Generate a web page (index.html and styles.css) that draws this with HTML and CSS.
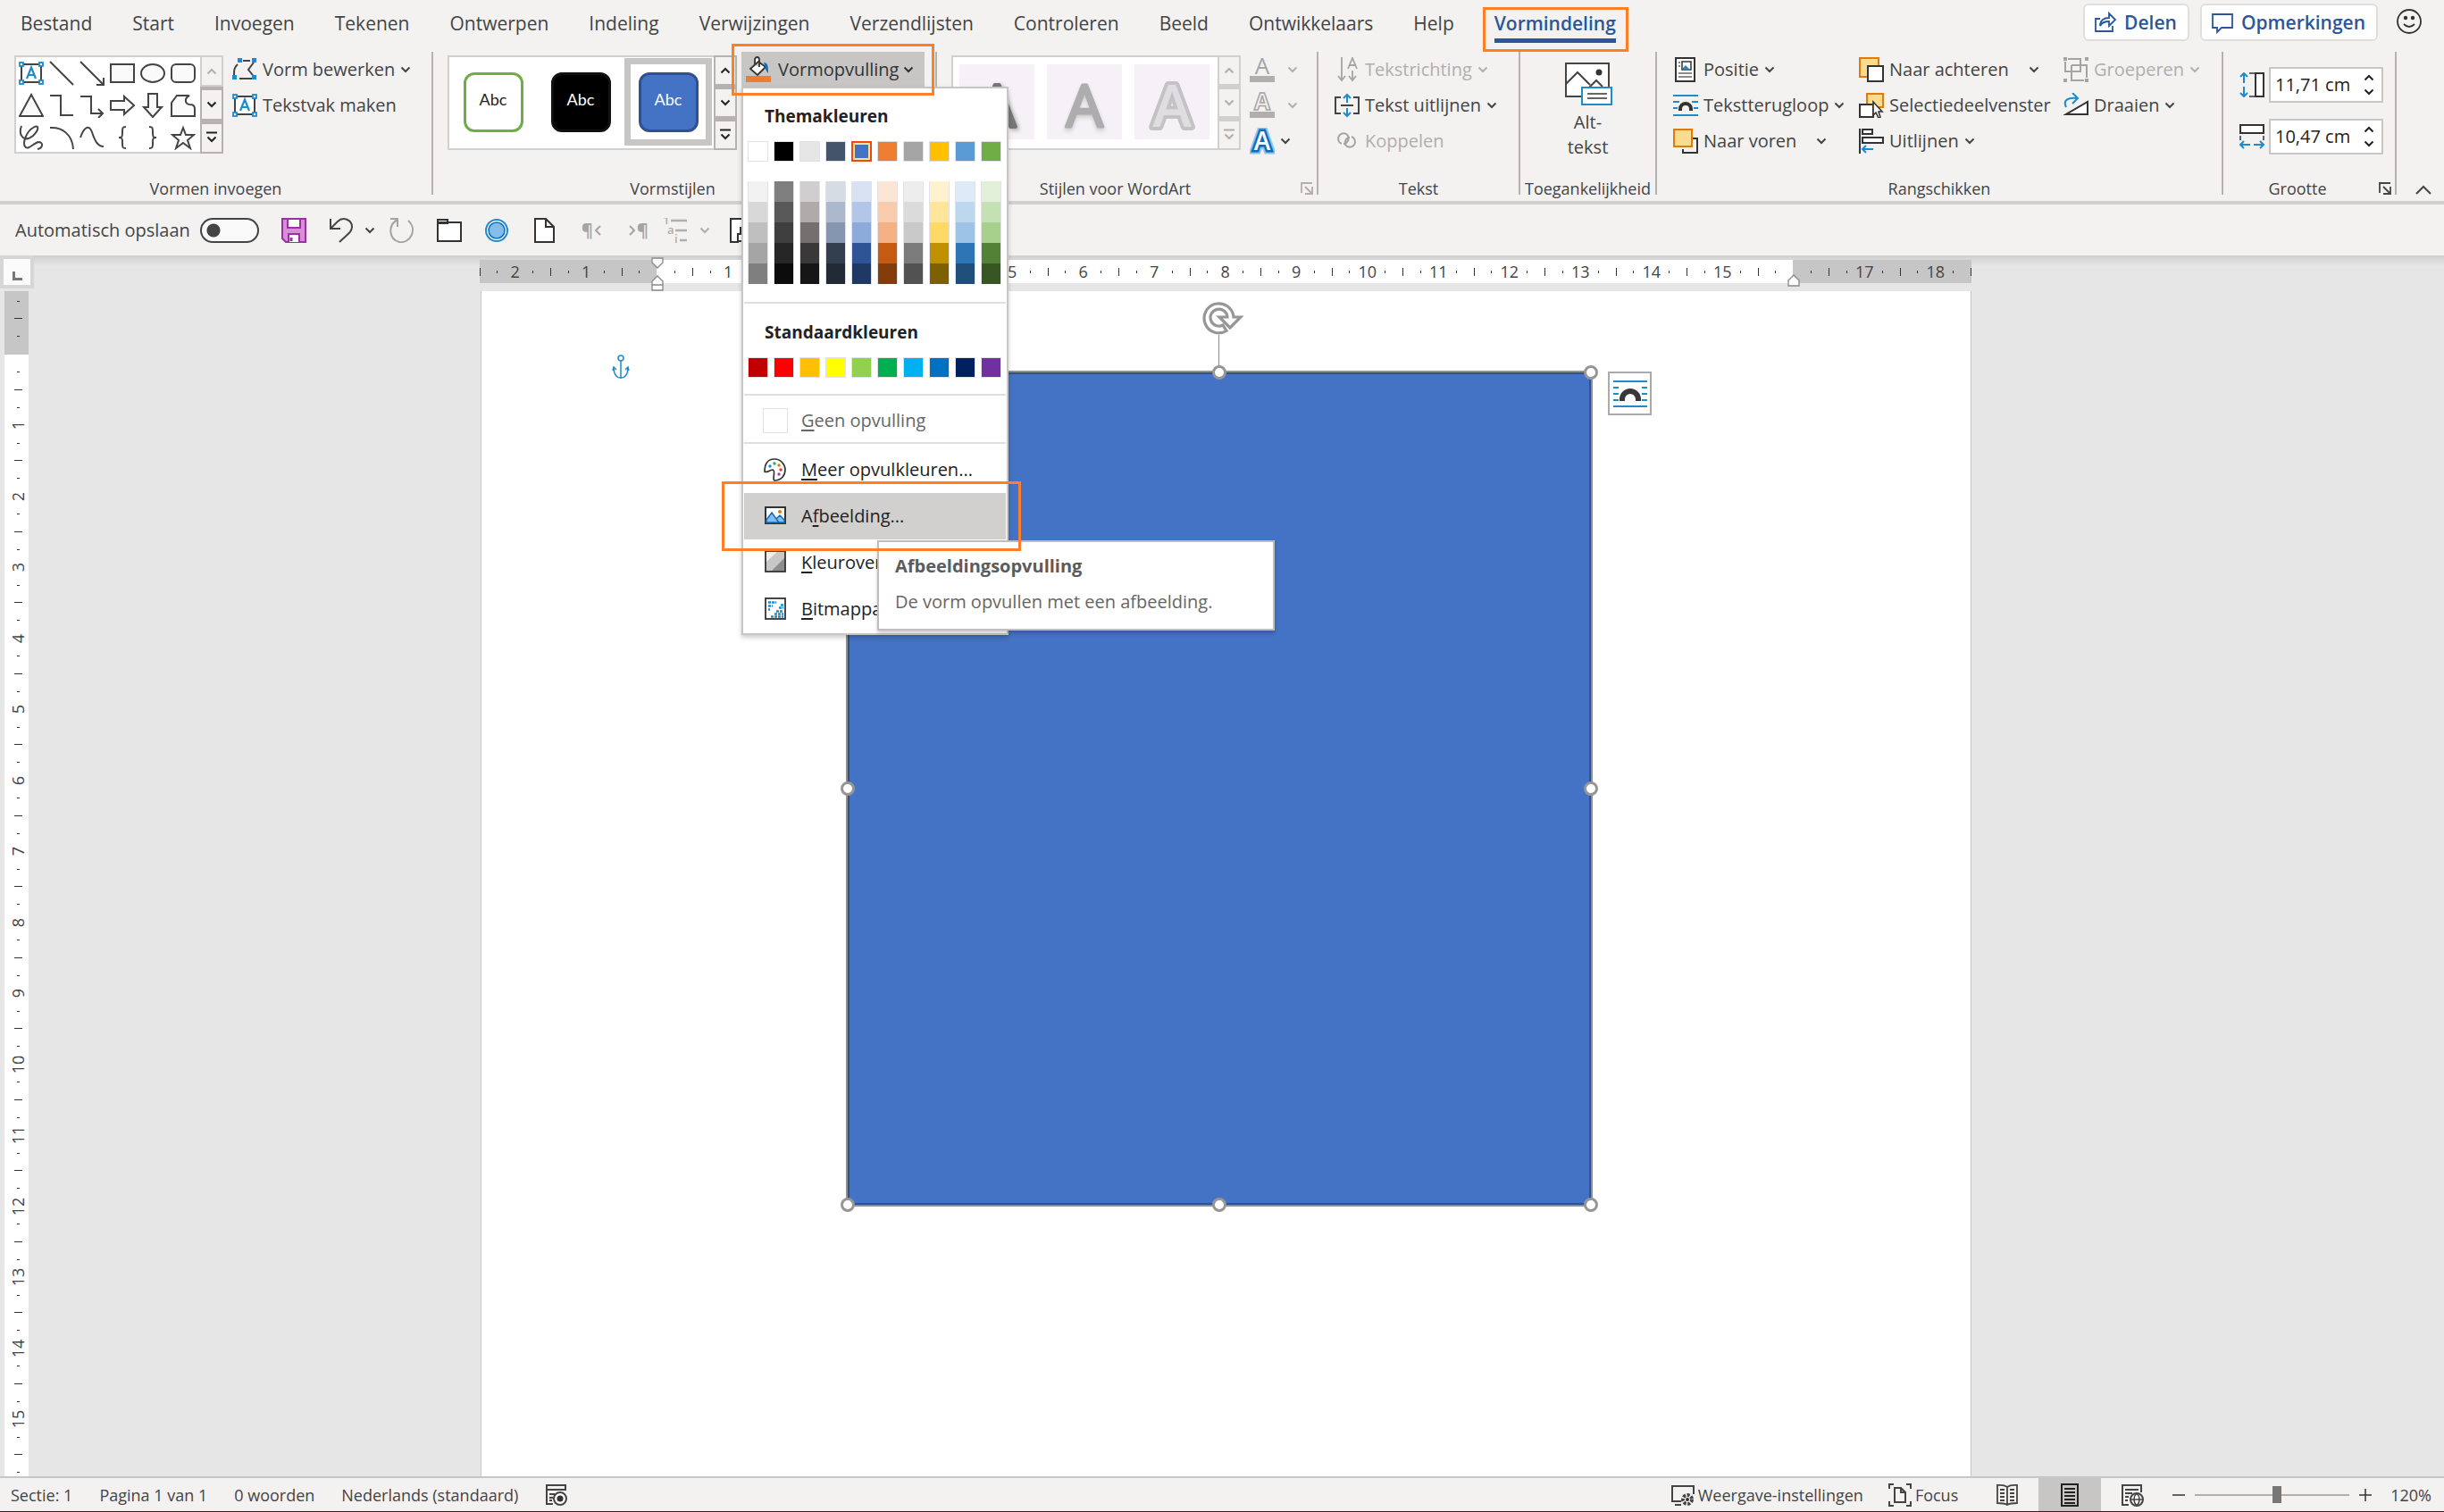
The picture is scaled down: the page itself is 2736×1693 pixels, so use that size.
FILE: index.html
```html
<!DOCTYPE html>
<html lang="nl">
<head>
<meta charset="utf-8">
<title>Document - Vormindeling</title>
<link rel="stylesheet" href="styles.css">
</head>
<body>
<svg class="defs" aria-hidden="true">
  <symbol id="chev" viewBox="0 0 12 8"><path d="M1.5 1.5 6 6l4.500-4.500" fill="none" stroke="currentColor" stroke-width="2"/></symbol>
  <symbol id="chev-up" viewBox="0 0 12 8"><path d="M1.500 6.500 6 2l4.500 4.500" fill="none" stroke="currentColor" stroke-width="2"/></symbol>
  <symbol id="more" viewBox="0 0 14 14"><path d="M1 1.500h12M2.500 6.500 7 11l4.500-4.500" fill="none" stroke="currentColor" stroke-width="2"/></symbol>
  <symbol id="launcher" viewBox="0 0 14 14"><path d="M1 12V1h12M5 5l7 7M13 5v8H5" fill="none" stroke="currentColor" stroke-width="1.800"/></symbol>
  <symbol id="textbox" viewBox="0 0 28 28"><rect x="3" y="4" width="22" height="20" fill="#fff" stroke="#444" stroke-width="2"/><path d="M9 20 14 7.500 19 20M10.500 16h7" fill="none" stroke="#1e8bcd" stroke-width="2.200"/><g fill="#fff" stroke="#1e8bcd" stroke-width="1.800"><rect x="1" y="2" width="4" height="4"/><rect x="23" y="2" width="4" height="4"/><rect x="1" y="22" width="4" height="4"/><rect x="23" y="22" width="4" height="4"/></g></symbol>
  <symbol id="wrap" viewBox="0 0 28 28"><path d="M0 3h28M0 25h28M0 10h7M21 10h7M0 17h5M23 17h5" stroke="#1e8bcd" stroke-width="2"/><path d="M8 20v-2a6 6 0 0 1 12 0v2" fill="none" stroke="#333" stroke-width="4"/></symbol>
</svg>

<header class="tabs">
  <nav class="tablist" aria-label="Linttabbladen">
    <button>Bestand</button><button>Start</button><button>Invoegen</button><button>Tekenen</button><button>Ontwerpen</button><button>Indeling</button><button>Verwijzingen</button><button>Verzendlijsten</button><button>Controleren</button><button>Beeld</button><button>Ontwikkelaars</button><button>Help</button><button class="active"><span>Vormindeling</span></button>
  </nav>
  <div class="actions">
    <button class="action"><svg width="26" height="26" viewBox="0 0 26 26"><path d="M7 9H2v14h19v-6M7 17c0-6 4-9 10-9V3l7 7-7 7v-5c-5 0-8 1-10 5z" fill="none" stroke="#2b579a" stroke-width="1.800"/></svg>Delen</button>
    <button class="action"><svg width="26" height="26" viewBox="0 0 26 26"><path d="M2 4h22v15H12l-5 5v-5H2z" fill="none" stroke="#2b579a" stroke-width="1.800"/></svg>Opmerkingen</button>
    <button class="smiley" aria-label="Feedback"><svg width="30" height="30" viewBox="0 0 30 30"><circle cx="15" cy="15" r="13" fill="none" stroke="#333" stroke-width="1.800"/><circle cx="11" cy="11" r="2.200" fill="#333"/><circle cx="19" cy="11" r="2.200" fill="#333"/><path d="M9 18q6 6 12 0" fill="none" stroke="#333" stroke-width="1.800"/></svg></button>
  </div>
</header>

<section class="ribbon" aria-label="Vormindeling">
  <div class="group">
    <div class="content g-shapes">
      <div class="gallery">
        <div class="shapes">
          <svg viewBox="0 0 28 28"><use href="#textbox"/></svg>
          <svg viewBox="0 0 28 28"><path d="M1 1 27 27"/></svg>
          <svg viewBox="0 0 28 28"><path d="M1 1 27 27M19 27h8v-8"/></svg>
          <svg viewBox="0 0 28 28"><rect x="1" y="4" width="26" height="20"/></svg>
          <svg viewBox="0 0 28 28"><ellipse cx="14" cy="14" rx="13" ry="10"/></svg>
          <svg viewBox="0 0 28 28"><rect x="1" y="4" width="26" height="20" rx="5"/></svg>
          <svg viewBox="0 0 28 28"><path d="M14 2 27 26H1z"/></svg>
          <svg viewBox="0 0 28 28"><path d="M1 3h12v22h14"/></svg>
          <svg viewBox="0 0 28 28"><path d="M1 4h12v19h13M21 18l5 5-5 5"/></svg>
          <svg viewBox="0 0 28 28"><path d="M1 9h15V4l11 10-11 10v-5H1z"/></svg>
          <svg viewBox="0 0 28 28"><path d="M9 1h10v15h5L14 27 4 16h5z"/></svg>
          <svg viewBox="0 0 28 28"><path d="M7 3h14c-6 3-5 9 0 10 6 0 6 3 6 6v7H1V11z"/></svg>
          <svg viewBox="0 0 28 28"><path fill="none" d="M3 1C-1 12 6 20 16 12c8-8 6-13 0-9C9 7 4 19 7 24s10-4 15-5c6 0 5 7-1 8"/></svg>
          <svg viewBox="0 0 28 28"><path fill="none" d="M1 3c14-1 25 8 26 24"/></svg>
          <svg viewBox="0 0 28 28"><path fill="none" d="M1 14C5 2 11-1 14 8s6 16 13 16"/></svg>
          <svg viewBox="0 0 28 28"><path fill="none" d="M18 2c-4 0-4 1-4 6s0 6-4 6c4 0 4 1 4 6s0 6 4 6"/></svg>
          <svg viewBox="0 0 28 28"><path fill="none" d="M10 2c4 0 4 1 4 6s0 6 4 6c-4 0-4 1-4 6s0 6-4 6"/></svg>
          <svg viewBox="0 0 28 28"><path d="m14 3 3 8h9l-7 6 3 9-8-6-8 6 3-9-7-6h9z"/></svg>
        </div>
        <div class="scroller"><button class="off" aria-label="Omhoog"><svg width="12" height="8"><use href="#chev-up"/></svg></button><button aria-label="Omlaag"><svg width="12" height="8"><use href="#chev"/></svg></button><button aria-label="Meer"><svg width="14" height="14"><use href="#more"/></svg></button></div>
      </div>
      <div class="stack">
        <button class="cmd"><svg width="28" height="28" viewBox="0 0 28 28"><path d="M12 4h8M24 6l-6 8 8 10M8 24h14M6 8c-4 4-4 6-4 12" fill="none" stroke="#444" stroke-width="2"/><g fill="#1e8bcd"><rect x="6" y="1" width="5" height="5"/><rect x="22" y="1" width="5" height="5"/><rect x="0" y="20" width="5" height="5"/><rect x="22" y="20" width="5" height="5"/></g></svg>Vorm bewerken<svg class="chev"><use href="#chev"/></svg></button>
        <button class="cmd"><svg width="28" height="28"><use href="#textbox"/></svg>Tekstvak maken</button>
      </div>
    </div>
    <div class="label">Vormen invoegen</div>
  </div>

  <div class="group">
    <div class="content g-styles">
      <div class="gallery wide">
        <div class="styles">
          <button class="cell"><span class="abc green">Abc</span></button>
          <button class="cell"><span class="abc black">Abc</span></button>
          <button class="cell selected"><span class="abc blue">Abc</span></button>
        </div>
        <div class="scroller"><button aria-label="Omhoog"><svg width="12" height="8"><use href="#chev-up"/></svg></button><button aria-label="Omlaag"><svg width="12" height="8"><use href="#chev"/></svg></button><button aria-label="Meer"><svg width="14" height="14"><use href="#more"/></svg></button></div>
      </div>
      <div class="fill-wrap">
        <button class="cmd fill"><svg width="28" height="30" viewBox="0 0 28 30"><rect y="22" width="28" height="7" fill="#ed7d31"/><path d="M14 6 5 14l8 7 9-9zM10 10V4c0-4 5-4 5 0v8" fill="#fff" stroke="#333" stroke-width="1.800"/><path d="M20 7c5 0 5 5 5 12-3-3-3-6-5-12z" fill="#0f6cbd"/></svg>Vormopvulling<svg class="chev"><use href="#chev"/></svg></button>
        <div class="menu" role="menu">
          <h2>Themakleuren</h2>
          <div class="swatches" id="theme"></div>
          <div class="swatches shades" id="shades"></div>
          <hr>
          <h2>Standaardkleuren</h2>
          <div class="swatches" id="standard"></div>
          <hr>
          <button class="item dim"><span class="nofill"></span><span><u>G</u>een opvulling</span></button>
          <hr>
          <button class="item more-fill"><svg width="28" height="28" viewBox="0 0 28 28"><path d="M13 2C5 2 2 8 2 16c3 2 6-2 9-2 4 1-1 11 2 12 8 0 12-6 12-12S20 2 13 2z" fill="#fff" stroke="#333" stroke-width="1.700"/><circle cx="8" cy="10" r="1.700" fill="#1e8bcd"/><circle cx="13" cy="7" r="1.700" fill="#2fa84f"/><circle cx="18" cy="9" r="1.700" fill="#e8760e"/><circle cx="20" cy="14" r="1.700" fill="#e33"/><circle cx="18" cy="19" r="1.700" fill="#9b3fb5"/></svg><span><u>M</u>eer opvulkleuren...</span></button>
          <div class="hot">
            <button class="item current"><svg width="28" height="28" viewBox="0 0 28 28"><rect x="3" y="4" width="22" height="18" fill="#fff" stroke="#333" stroke-width="2"/><path d="M4 18l6-8 8 11H4zM15 17l4-4 5 5v3h-6z" fill="#83bdec" stroke="#0f6cbd" stroke-width="1.500"/><circle cx="19" cy="9" r="2" fill="#e8760e"/></svg><span>A<u>f</u>beelding...</span></button>
            <div class="tooltip" role="tooltip"><strong>Afbeeldingsopvulling</strong><p>De vorm opvullen met een afbeelding.</p></div>
            <div class="mark"></div>
          </div>
          <button class="item"><svg width="28" height="28" viewBox="0 0 28 28"><rect x="3" y="1" width="22" height="23" fill="#c8c8c8"/><path d="M3 1h14L3 14z" fill="#eee"/><path d="M25 8v16H9z" fill="#8d8d8d"/><rect x="3" y="1" width="22" height="23" fill="none" stroke="#333" stroke-width="1.800"/></svg><span><u>K</u>leurovergang</span></button>
          <button class="item"><svg width="28" height="28" viewBox="0 0 28 28"><rect x="3" y="2" width="22" height="23" fill="#fff" stroke="#333" stroke-width="1.800"/><path d="M6 6.500h9M6 10.500h5M6 14.500h2M20 9.500h3M18 12.500h5M15 16.500h8M13 19.500h10M9 22.500h14" stroke="#1e8bcd" stroke-width="2.500" stroke-dasharray="3 1"/></svg><span><u>B</u>itmappatroon</span></button>
        </div>
      </div>
    </div>
    <div class="label has-launcher">Vormstijlen</div>
  </div>

  <div class="group">
    <div class="content g-wordart">
      <div class="gallery wide muted">
        <div class="tiles">
          <svg viewBox="0 0 84 84"><text x="42" y="70" class="wa wa1">A</text></svg>
          <svg viewBox="0 0 84 84"><text x="42" y="70" class="wa wa2">A</text></svg>
          <svg viewBox="0 0 84 84"><text x="42" y="70" class="wa wa3">A</text></svg>
        </div>
        <div class="scroller"><button aria-label="Omhoog"><svg width="12" height="8"><use href="#chev-up"/></svg></button><button aria-label="Omlaag"><svg width="12" height="8"><use href="#chev"/></svg></button><button aria-label="Meer"><svg width="14" height="14"><use href="#more"/></svg></button></div>
      </div>
      <div class="stack">
        <button class="cmd tint off"><svg width="28" height="30" viewBox="0 0 28 30"><rect y="22" width="28" height="7" fill="#b1aeab"/><text x="14" y="20" class="ic-a">A</text></svg><svg class="chev"><use href="#chev"/></svg></button>
        <button class="cmd tint off"><svg width="28" height="30" viewBox="0 0 28 30"><rect y="22" width="28" height="7" fill="#b1aeab"/><text x="14" y="20" class="ic-a outline">A</text></svg><svg class="chev"><use href="#chev"/></svg></button>
        <button class="cmd effects"><svg width="28" height="30" viewBox="0 0 28 30"><text x="14" y="25" class="ic-fx glow">A</text><text x="14" y="25" class="ic-fx edge">A</text><text x="14" y="25" class="ic-fx">A</text></svg><svg class="chev"><use href="#chev"/></svg></button>
      </div>
    </div>
    <div class="label has-launcher">Stijlen voor WordArt<svg class="launcher off"><use href="#launcher"/></svg></div>
  </div>

  <div class="group">
    <div class="content g-text">
      <div class="stack">
        <button class="cmd off"><svg width="28" height="28" viewBox="0 0 28 28"><path d="M8 0v26M4 21l4 5 4-5M20 15v11M16 21l4 5 4-5M15 13l5-12 5 12M17 9h6" fill="none" stroke="#a6a4a2" stroke-width="1.800"/></svg>Tekstrichting<svg class="chev"><use href="#chev"/></svg></button>
        <button class="cmd"><svg width="28" height="28" viewBox="0 0 28 28"><path d="M7 5H1v18h6M21 5h6v18h-6M7 14h14" fill="none" stroke="#444" stroke-width="2"/><path d="M14 11V2M10 6l4-4 4 4M14 17v9M10 22l4 4 4-4" fill="none" stroke="#1e8bcd" stroke-width="2"/></svg>Tekst uitlijnen<svg class="chev"><use href="#chev"/></svg></button>
        <button class="cmd off"><svg width="28" height="28" viewBox="0 0 28 28"><path d="M8 17a6 6 0 1 1 7-9c2 4-1 9-5 9M19 9a6 6 0 1 1-7 9c-1-4 1-8 5-8" fill="none" stroke="#a6a4a2" stroke-width="2"/></svg>Koppelen</button>
      </div>
    </div>
    <div class="label">Tekst</div>
  </div>

  <div class="group">
    <div class="content g-alt">
      <button class="big"><svg width="54" height="50" viewBox="0 0 54 50"><rect x="2" y="2" width="48" height="37" fill="#fff" stroke="#444" stroke-width="2"/><path d="M2 25 15 12l14 14M28 29l8-8 7 7" fill="none" stroke="#444" stroke-width="2"/><circle cx="39" cy="12" r="3.500" fill="#333"/><rect x="20" y="29" width="33" height="19" fill="#fff" stroke="#1e8bcd" stroke-width="2"/><path d="M26 36h22M26 41h22" stroke="#666" stroke-width="2"/></svg><span>Alt-<br>tekst</span></button>
    </div>
    <div class="label">Toegankelijkheid</div>
  </div>

  <div class="group">
    <div class="content g-arrange">
      <div class="stack">
        <button class="cmd"><svg width="28" height="28" viewBox="0 0 28 28"><rect x="3" y="1" width="21" height="26" fill="#fff" stroke="#333" stroke-width="2"/><rect x="10" y="5" width="10" height="9" fill="#fff" stroke="#333" stroke-width="1.500"/><path d="m10 13 4-4 5 5z" fill="#1e8bcd"/><path d="M6 6h2M6 10h2M6 18h15M6 22h15" stroke="#666" stroke-width="1.500"/></svg>Positie<svg class="chev"><use href="#chev"/></svg></button>
        <button class="cmd"><svg width="28" height="28"><use href="#wrap"/></svg>Tekstterugloop<svg class="chev"><use href="#chev"/></svg></button>
        <button class="cmd split"><svg width="28" height="28" viewBox="0 0 28 28"><path d="M22 11h5v16H11v-4" fill="none" stroke="#333" stroke-width="2"/><rect x="1" y="1" width="20" height="19" fill="#f9dc92" stroke="#e07b0c" stroke-width="2"/></svg>Naar voren<svg class="chev"><use href="#chev"/></svg></button>
      </div>
      <div class="stack">
        <button class="cmd split"><svg width="28" height="28" viewBox="0 0 28 28"><rect x="1" y="1" width="21" height="21" fill="#f9dc92" stroke="#e07b0c" stroke-width="2"/><rect x="10" y="10" width="17" height="17" fill="#fff" stroke="#333" stroke-width="2"/></svg>Naar achteren<svg class="chev"><use href="#chev"/></svg></button>
        <button class="cmd"><svg width="28" height="28" viewBox="0 0 28 28"><rect x="9" y="1" width="18" height="15" fill="#f9dc92" stroke="#e07b0c" stroke-width="2"/><rect x="1" y="13" width="15" height="14" fill="#fff" stroke="#333" stroke-width="2"/><path d="M16 10v15l3-3 3 6 2-1-2-6h4z" fill="#fff" stroke="#333" stroke-width="1.600"/></svg>Selectiedeelvenster</button>
        <button class="cmd"><svg width="28" height="28" viewBox="0 0 28 28"><path d="M1 0v28" stroke="#333" stroke-width="2"/><rect x="4" y="1" width="11" height="5" fill="#fff" stroke="#333" stroke-width="2"/><rect x="4" y="10" width="23" height="6" fill="#fff" stroke="#333" stroke-width="2"/><path d="M16 23H4M8 19l-4 4 4 4" fill="none" stroke="#1e8bcd" stroke-width="2"/></svg>Uitlijnen<svg class="chev"><use href="#chev"/></svg></button>
      </div>
      <div class="stack">
        <button class="cmd off"><svg width="28" height="28" viewBox="0 0 28 28"><path d="M5 2h14v14H2V5M9 9h17v14M9 9v17h14" fill="none" stroke="#a6a4a2" stroke-width="2"/><g fill="#a6a4a2"><rect width="4" height="4"/><rect x="24" width="4" height="4"/><rect y="24" width="4" height="4"/><rect x="24" y="24" width="4" height="4"/></g></svg>Groeperen<svg class="chev"><use href="#chev"/></svg></button>
        <button class="cmd"><svg width="28" height="28" viewBox="0 0 28 28"><path d="M3 24h24V10z" fill="#fff" stroke="#333" stroke-width="2"/><path d="M3 16C-1 8 5 5 15 6M10 0l6 6-6 6" fill="none" stroke="#1e8bcd" stroke-width="2"/></svg>Draaien<svg class="chev"><use href="#chev"/></svg></button>
      </div>
    </div>
    <div class="label">Rangschikken</div>
  </div>

  <div class="group">
    <div class="content g-size">
      <label class="size"><svg width="28" height="28" viewBox="0 0 28 28"><path d="M5 12V1M1 5l4-4 4 4M5 16v11M1 23l4 4 4-4" fill="none" stroke="#1e8bcd" stroke-width="2"/><path d="M11 1h6M11 27h6" stroke="#333" stroke-width="1.500"/><rect x="18" y="1" width="9" height="26" fill="#fff" stroke="#333" stroke-width="2"/></svg><span class="spin"><input value="11,71 cm" aria-label="Hoogte"><span class="arrows"><svg width="12" height="8"><use href="#chev-up"/></svg><svg width="12" height="8"><use href="#chev"/></svg></span></span></label>
      <label class="size"><svg width="28" height="28" viewBox="0 0 28 28"><rect x="1" y="1" width="26" height="9" fill="#fff" stroke="#333" stroke-width="2"/><path d="M1 13v5M27 13v5" stroke="#333" stroke-width="1.500"/><path d="M12 23H1M5 19l-4 4 4 4M16 23h11M23 19l4 4-4 4" fill="none" stroke="#1e8bcd" stroke-width="2"/></svg><span class="spin"><input value="10,47 cm" aria-label="Breedte"><span class="arrows"><svg width="12" height="8"><use href="#chev-up"/></svg><svg width="12" height="8"><use href="#chev"/></svg></span></span></label>
    </div>
    <div class="label has-launcher">Grootte<svg class="launcher"><use href="#launcher"/></svg></div>
  </div>

  <div class="collapse"><button aria-label="Lint samenvouwen"><svg width="18" height="11" viewBox="0 0 18 11"><path d="M1 10 9 2l8 8" fill="none" stroke="#444" stroke-width="2"/></svg></button></div>
</section>

<section class="qat" aria-label="Snelle toegang">
  <label class="autosave">Automatisch opslaan<input type="checkbox" role="switch"></label>
  <button aria-label="Opslaan"><svg width="28" height="28" viewBox="0 0 28 28"><path d="M1 1h26v26H5l-4-4z" fill="#d88fd8" stroke="#9b2fa5" stroke-width="2"/><path d="M7 1h14v10H7zM8 27v-9h12v9" fill="#fff" stroke="#9b2fa5" stroke-width="2"/><path d="M11 22v4" stroke="#9b2fa5" stroke-width="3"/></svg></button>
  <div class="undo">
    <button aria-label="Ongedaan maken"><svg width="28" height="28" viewBox="0 0 28 28"><path d="M2 1v11h11M2 12 10 4c6-6 16-2 16 6 0 6-5 8-14 17" fill="none" stroke="#444" stroke-width="2"/></svg></button>
    <svg class="chev"><use href="#chev"/></svg>
  </div>
  <button aria-label="Opnieuw"><svg width="28" height="28" viewBox="0 0 28 28"><path d="M1 1h8v9M9 2C-2 8-1 24 11 27c12 2 21-14 10-24" fill="none" stroke="#a6a4a2" stroke-width="2"/></svg></button>
  <button aria-label="Openen"><svg width="28" height="28" viewBox="0 0 28 28"><path d="M1 5h26v21H1zM1 5V2h11v4H1" fill="#fff" stroke="#333" stroke-width="2"/></svg></button>
  <button aria-label="Macro"><svg width="28" height="28" viewBox="0 0 28 28"><circle cx="14" cy="14" r="12" fill="#fff" stroke="#1e8bcd" stroke-width="2"/><circle cx="14" cy="14" r="9" fill="#83bdec" stroke="#0f6cbd" stroke-width="1.500"/></svg></button>
  <button aria-label="Nieuw"><svg width="28" height="28" viewBox="0 0 28 28"><path d="M4 1h12l9 9v17H4zM16 1v9h9" fill="#fff" stroke="#333" stroke-width="2"/></svg></button>
  <button class="para" aria-label="Van links naar rechts">¶<svg width="8" height="12" viewBox="0 0 8 12"><path d="M7 1 2 6l5 5" fill="none" stroke="currentColor" stroke-width="2"/></svg></button>
  <div class="tail">
    <button class="para" aria-label="Van rechts naar links"><svg width="8" height="12" viewBox="0 0 8 12"><path d="m1 1 5 5-5 5" fill="none" stroke="currentColor" stroke-width="2"/></svg>¶</button>
    <button aria-label="Lijst met meerdere niveaus"><svg width="28" height="28" viewBox="0 0 28 28"><path d="M9 3h18M14 14h13M19 25h8" stroke="#b1aeab" stroke-width="2.500"/><g class="lvl"><text x="0" y="7">1</text><text x="5" y="18">a</text><text x="13" y="28">i</text></g></svg></button>
    <svg class="chev off"><use href="#chev"/></svg>
    <button class="last" aria-label="Afdrukvoorbeeld"><svg width="28" height="28" viewBox="0 0 28 28"><path d="M10 27H1V1h18v8M9 18h8v8H9zM12 10v8" fill="#fff" stroke="#333" stroke-width="2"/></svg></button>
  </div>
</section>

<main class="workspace">
  <div class="corner"><button aria-label="Tabstop">&nbsp;</button></div>
  <div class="hruler" id="hruler">
    <svg class="indent indent-left" width="14" height="38" viewBox="0 0 14 38"><path d="M1 1h12v5L7 12 1 6zM1 37V27l6-6 6 6v10zM1 31h12" fill="#fff" stroke="#8a8886" stroke-width="1.300"/></svg>
    <svg class="indent indent-right" width="14" height="38" viewBox="0 0 14 38"><path d="M1 32v-6l6-6 6 6v6z" fill="#fff" stroke="#8a8886" stroke-width="1.300"/></svg>
  </div>
  <div class="vruler" id="vruler"></div>
  <article class="page">
    <svg class="anchor" width="20" height="28" viewBox="0 0 20 28"><path d="M10 7v19M2 15C2 30 18 30 18 15M1 18l1-4 3 3M19 18l-1-4-3 3" fill="none" stroke="#1e8bcd" stroke-width="1.500"/><circle cx="10" cy="4" r="3" fill="none" stroke="#1e8bcd" stroke-width="1.500"/></svg>
    <div class="shape">
      <svg class="rotate" width="46" height="76" viewBox="0 0 46 76"><path d="M18.500 38v38" stroke="#969696" stroke-width="1.200"/><path d="M27 33.500A16.500 16.500 0 1 1 35 18h8l-12 12-12-12h9a9.500 9.500 0 1 0-5 9z" fill="#fff" stroke="#969696" stroke-width="3.200"/></svg>
      <i class="h nw"></i><i class="h n"></i><i class="h ne"></i><i class="h w"></i><i class="h e"></i><i class="h sw"></i><i class="h s"></i><i class="h se"></i>
    </div>
    <button class="layout" aria-label="Indelingsopties"><svg width="38" height="30" viewBox="0 0 38 30"><path d="M0 1h38M0 8h6M32 8h6M0 15h6M32 15h6M0 22h6M32 22h6M0 29h38" stroke="#1e8bcd" stroke-width="2"/><path d="M10 23v-2a9 9 0 0 1 18 0v2" fill="none" stroke="#383838" stroke-width="6"/></svg></button>
  </article>
</main>

<footer class="status">
  <div class="info"><span>Sectie: 1</span><span>Pagina 1 van 1</span><span>0 woorden</span><span>Nederlands (standaard)</span>
    <svg width="26" height="26" viewBox="0 0 26 26"><path d="M9 23H2V2h21v6M2 7h21M5 12h6M5 16h4M5 19h3" fill="none" stroke="#444" stroke-width="2"/><circle cx="17" cy="17" r="7" fill="#fff" stroke="#444" stroke-width="2"/><circle cx="17" cy="17" r="3.500" fill="#333"/></svg></div>
  <div class="views">
    <button class="st"><svg width="26" height="26" viewBox="0 0 26 26"><path d="M11 20H1V3h24v9M4 24h7" fill="none" stroke="#444" stroke-width="2"/><circle cx="18" cy="18" r="5" fill="#fff" stroke="#444" stroke-width="4" stroke-dasharray="3 1.500"/><circle cx="18" cy="18" r="2" fill="#333"/></svg>Weergave-instellingen</button>
    <button class="st focus"><svg width="26" height="26" viewBox="0 0 26 26"><path d="M6 1H1v5M20 1h5v5M1 20v5h5M25 20v5h-5M7 5h7l5 5v11H7zM14 5v5h5" fill="none" stroke="#444" stroke-width="2"/></svg>Focus</button>
    <button class="view" aria-label="Leesmodus"><svg width="26" height="26" viewBox="0 0 26 26"><path d="M13 4C9 1 5 2 2 2v20c4 0 8 0 11 2 3-2 7-2 11-2V2c-3 0-7-1-11 2zv20M5 7h5M5 11h5M5 15h5M5 19h5M16 7h5M16 11h5M16 15h5M16 19h5" fill="none" stroke="#444" stroke-width="1.800"/></svg></button>
    <button class="view on" aria-label="Afdrukweergave"><svg width="26" height="26" viewBox="0 0 26 26"><path d="M4 1h18v24H4zM7 6h12M7 10h12M7 14h12M7 18h12M7 22h12" fill="none" stroke="#222" stroke-width="2"/></svg></button>
    <button class="view" aria-label="Weblay-out"><svg width="26" height="26" viewBox="0 0 26 26"><path d="M9 24H2V2h21v8M5 7h15M5 11h8M5 15h4M5 19h3" fill="none" stroke="#444" stroke-width="2"/><circle cx="18" cy="18" r="7" fill="#fff" stroke="#444" stroke-width="2"/><path d="M11 18h14M18 11c-4 4-4 10 0 14 4-4 4-10 0-14" fill="none" stroke="#444" stroke-width="1.500"/></svg></button>
    <div class="zoom"><button aria-label="Uitzoomen"><svg width="14" height="14" viewBox="0 0 14 14"><path d="M0 7h14" stroke="#333" stroke-width="1.500"/></svg></button><input type="range" min="0" max="100" value="53" aria-label="Zoom"><button aria-label="Inzoomen"><svg width="14" height="14" viewBox="0 0 14 14"><path d="M0 7h14M7 0v14" stroke="#333" stroke-width="1.500"/></svg></button><span>120%</span></div>
  </div>
</footer>
<script src="script.js"></script>
</body>
</html>
```
FILE: styles.css
```css
* { box-sizing: border-box; }
body {
  margin: 0;
  min-height: 100vh;
  display: flex;
  flex-direction: column;
  background: #e6e6e6;
  color: #444;
  font: 20px/28px "Open Sans", "Noto Sans", sans-serif;
}
button, input { font: inherit; color: inherit; }
button { background: none; border: 0; padding: 0; margin: 0; display: flex; align-items: center; justify-content: center; white-space: nowrap; }
svg { flex: none; display: block; }
.defs { position: absolute; width: 0; height: 0; }
.chev { width: 12px; height: 8px; }
.off { color: #b1aeab; }

/* Tabs */
.tabs { height: 58px; background: #f3f2f1; display: flex; justify-content: space-between; padding: 4px 24px 0 0; font-size: 21px; }
.tablist { display: flex; height: 44px; padding-left: 1px; }
.tablist button { padding: 0 23px 0 22px; }
.tabs .active { color: #2b579a; font-weight: 600; position: relative; }
.active::before { content: ""; position: absolute; left: 22px; right: 23px; bottom: 0; height: 5px; background: #2b579a; }
.active::after { content: ""; position: absolute; inset: 4px 9px -10px 9px; border: 3px solid #ff7f27; }
.actions { display: flex; height: 42px; gap: 12px; }
.action { background: #fff; border: 2px solid #e1dfdd; border-radius: 6px; padding: 0 12px 0 10px; gap: 8px; font-weight: 600; color: #2b579a; }
.smiley { margin-left: 8px; align-self: flex-start; height: 40px; }

/* Ribbon */
.ribbon { display: grid; grid-template-columns: 485fr 564fr 427fr 226fr 153fr 634fr 194fr 53fr; height: 171px; background: #f3f2f1; border-bottom: 4px solid #d2d0ce; padding-bottom: 7px; }
.group { border-right: 2px solid #b5b2b0; display: flex; flex-direction: column; min-width: 0; }
.content { flex: 1; display: flex; align-items: flex-start; }
.label { font-size: 18px; line-height: 14px; text-align: center; position: relative; white-space: nowrap; }
.has-launcher { padding-right: 26px; }
.launcher { width: 14px; height: 14px; position: absolute; right: 4px; top: 0; }
.stack { display: flex; flex-direction: column; }
.cmd { height: 40px; gap: 6px; justify-content: flex-start; }
.split .chev { margin-left: 16px; }
.gallery { display: flex; width: 234px; height: 110px; margin-top: 4px; border: 2px solid #d2d0ce; background: #fff; }
.wide { width: 324px; height: 106px; }
.scroller { width: 26px; display: grid; grid-template-rows: 1fr 1fr 1fr; gap: 2px; margin: -2px -2px -2px auto; background: #b5b2b0; color: #222; }
.scroller button { background: #f3f2f1; border: 2px solid #b5b2b0; }
.scroller .off { color: #b1aeab; border-color: #d2d0ce; }
.muted .scroller { background: #d2d0ce; color: #b1aeab; }
.muted .scroller button { border-color: #d2d0ce; }
.shapes { display: grid; grid-template-columns: repeat(6, 28px); gap: 6px; padding: 4px 0 0 3px; }
.shapes svg { width: 28px; height: 28px; fill: #fafafa; stroke: #444; stroke-width: 2; }
.g-shapes { padding-left: 16px; gap: 10px; }
.g-styles, .g-wordart { padding-left: 16px; }
.g-styles { gap: 5px; }
.g-wordart { gap: 10px; }
.g-text { padding-left: 18px; }
.g-alt { justify-content: center; padding-top: 11px; }
.g-arrange { padding-left: 18px; display: grid; grid-template-columns: 208px 229px auto; }
.g-size { padding: 17px 0 0 18px; flex-direction: column; gap: 18px; }
.styles { display: flex; padding-top: 1px; }
.cell { width: 98px; height: 98px; }
.selected { border: 7px solid #c8c6c4; }
.abc { width: 67px; height: 67px; border-radius: 12px; border: 3px solid; display: flex; align-items: center; justify-content: center; font: 18px/24px Lato, sans-serif; padding-bottom: 6px; }
.green { background: #fff; border-color: #70ad47; color: #222; }
.black { background: #000; border-color: #111; color: #fff; }
.blue { background: #4472c4; border-color: #2f528f; color: #fff; }
.tiles { display: flex; gap: 14px; padding: 8px 0 0 7px; }
.tiles svg { width: 84px; height: 84px; background: #f5f1f7; }
.wa { font-size: 66px; text-anchor: middle; stroke-linejoin: round; paint-order: stroke; }
.wa1 { fill: #767676; stroke: #767676; stroke-width: 4; filter: drop-shadow(2px 2px 2px #aaa); }
.wa2 { fill: #aeacae; stroke: #aeacae; stroke-width: 3; filter: drop-shadow(0 3px 2px #ccc); }
.wa3 { fill: #e0dde1; stroke: #c4c2c5; stroke-width: 8; font-weight: 600; }
.ic-a { font-size: 26px; fill: #a6a4a2; text-anchor: middle; }
.outline { font-weight: 700; fill: #f3f2f1; stroke: #a6a4a2; stroke-width: 1.500px; }
.ic-fx { font-size: 28px; font-weight: 600; text-anchor: middle; fill: #fff; }
.glow { stroke: #8cc4f0; stroke-width: 9; }
.edge { stroke: #0f6cbd; stroke-width: 5; }
.tint .chev { margin-left: 8px; }
.big { flex-direction: column; gap: 4px; }
.size { display: flex; align-items: center; gap: 5px; }
.spin { display: flex; width: 128px; height: 40px; border: 2px solid #c8c6c4; background: #fff; color: #222; }
.spin input { border: 0; background: none; width: 104px; padding: 0 0 0 5px; outline: 0; }
.arrows { display: flex; flex-direction: column; justify-content: space-between; padding: 6px 0; }
.collapse { display: flex; align-items: flex-end; padding-left: 21px; }

/* Fill menu */
.fill-wrap { position: relative; z-index: 5; }
.fill { width: 205px; height: 40px; background: #c8c6c4; color: #333; padding-left: 5px; gap: 8px; }
.fill .chev { margin-left: -3px; }
.fill-wrap::after { content: ""; position: absolute; inset: -9px -11px; border: 3px solid #ff7f27; pointer-events: none; }
.menu { position: absolute; top: 39px; left: 0; width: 299px; padding: 19px 1px 1px; background: #fff; border: 2px solid #c8c6c4; box-shadow: 0 3px 5px rgba(0,0,0,.2); color: #222; }
.menu h2 { font-size: 19px; line-height: 24px; font-weight: 700; margin: 0 0 16px 23px; }
.menu hr { border: 0; height: 2px; background: #e1dfdd; margin: 18px 0 20px; }
.menu .item + hr, .menu hr:has(+ .item) { margin-bottom: 0; }
.menu .item + hr { margin-top: 0; }
.swatches { display: grid; grid-template-columns: repeat(10, 23px); gap: 6px; padding-left: 4px; }
.swatches button { height: 23px; border: 1px solid #e1e1e6; }
.swatches .picked { border: 2px solid #f04a12; outline: 2px solid #ffe09a; outline-offset: -4px; }
.shades { margin: 22px 0 20px; }
.shades div { display: flex; flex-direction: column; }
.shades button { border-width: 0 1px; }
.item { width: 100%; height: 52px; justify-content: flex-start; padding-left: 21px; gap: 15px; }
.more-fill { margin-top: 3px; }
.dim { color: #666; padding-top: 4px; }
.nofill { width: 28px; height: 28px; border: 1px solid #e1e1e6; }
.item u { text-decoration-thickness: 2px; text-underline-offset: 3px; }
.hot { position: relative; z-index: 2; }
.current { background: #d2d0ce; }
.tooltip { position: absolute; left: 149px; top: 53px; width: 445px; height: 101px; border: 2px solid #c0bebc; background: #fff; padding: 13px 18px; color: #666; white-space: nowrap; box-shadow: 0 3px 4px rgba(0,0,0,.2); }
.tooltip strong { color: #5c5c5c; display: block; }
.tooltip p { margin: 12px 0 0; }
.mark { position: absolute; left: -25px; top: -13px; width: 335px; height: 78px; border: 3px solid #ff7f27; pointer-events: none; }

/* Quick access toolbar */
.qat { height: 57px; background: #f3f2f1; display: flex; align-items: center; gap: 25px; padding: 0 17px; }
.autosave { display: flex; align-items: center; gap: 11px; white-space: nowrap; }
.autosave input { appearance: none; width: 66px; height: 28px; margin: 0; border: 2px solid #444; border-radius: 14px; background: #f9f9f9 radial-gradient(circle at 13px 12px, #444 7px, transparent 8px); }
.undo { display: flex; align-items: center; gap: 12px; margin-right: -9px; }
.tail { display: flex; align-items: center; gap: 13px; }
.last { margin-left: 9px; }
.para { width: 28px; color: #a6a4a2; font-weight: 700; gap: 1px; }
.lvl { font-size: 13px; font-weight: 600; fill: #b1aeab; }

/* Document area */
.workspace { flex: 1; display: grid; grid-template: 40px 1fr / 38px 499fr 1670px 529fr; background: linear-gradient(#cfcfcf, #e6e6e6 12px); }
.corner { grid-area: 1 / 1; width: 38px; height: 37px; background: #d6d6d6; padding: 4px; }
.corner button { width: 30px; height: 29px; background: #fbfbfb linear-gradient(#777, #777) 10px 21px / 11px 3px no-repeat; position: relative; }
.corner button::before { content: ""; width: 3px; height: 10px; background: #777; position: absolute; left: 10px; top: 14px; }
.hruler { grid-area: 1 / 3; margin: 5px 0 9px; background: linear-gradient(90deg, #c6c6c6 198px, #fff 198px 1470px, #c6c6c6 1470px); display: flex; justify-content: space-between; align-items: center; position: relative; font-size: 18px; }
.hruler span { width: 0; display: flex; justify-content: center; }
.hruler span::before, .vruler span::before { flex: none; background: #333; }
.hruler b, .vruler b { font-weight: 400; }
.hruler .q::before { content: ""; width: 1px; height: 3px; }
.hruler .half::before { content: ""; width: 1px; height: 9px; }
.indent { position: absolute; top: -3px; }
.indent-left { left: 192px; }
.indent-right { left: 1464px; }
.vruler { grid-area: 2 / 1; margin-left: 5px; width: 27px; background: linear-gradient(#c6c6c6 71px, #fff 71px); padding-top: 11px; overflow: hidden; height: 1327px; font-size: 18px; }
.vticks { height: 1312px; display: flex; flex-direction: column; justify-content: space-between; align-items: center; padding-left: 4px; }
.vruler span { height: 0; display: flex; align-items: center; }
.vruler b { transform: rotate(-90deg); }
.vruler .q::before { content: ""; width: 3px; height: 1px; }
.vruler .half::before { content: ""; width: 9px; height: 1px; }
.page { grid-area: 2 / 3; margin-left: 1px; background: #fff; border: solid #c6c6c6; border-width: 0 1px; position: relative; }
.anchor { position: absolute; left: 146px; top: 71px; }
.shape { position: absolute; left: 408px; top: 89px; width: 836px; height: 936px; background: #4472c4; border: 2px solid #8f9093; box-shadow: inset 0 0 0 2px #2f528f; }
.rotate { position: absolute; left: 397px; top: -80px; }
.h { position: absolute; width: 16px; height: 16px; margin: -8px; border: 3px solid #969696; border-radius: 50%; background: #fff; }
.nw, .n, .ne { top: 0; } .w, .e { top: 50%; } .sw, .s, .se { top: 100%; }
.nw, .w, .sw { left: 0; } .n, .s { left: 50%; } .ne, .e, .se { left: 100%; }
.layout { position: absolute; left: 1261px; top: 90px; width: 49px; height: 49px; border: 2px solid #ababab; background: #fff; }

/* Status bar */
.status { height: 40px; background: #f3f2f1; border-top: 2px solid #c6c6c6; border-bottom: 1px solid #3a1a1c; display: flex; justify-content: space-between; font-size: 18px; white-space: nowrap; }
.info { display: flex; align-items: center; gap: 30px; padding-left: 12px; }
.views { display: flex; align-items: stretch; }
.st { gap: 4px; }
.focus { margin: 0 20px 0 28px; }
.view { width: 70px; }
.on { background: #c8c6c4; }
.zoom { display: flex; align-items: center; margin-left: 10px; gap: 11px; padding-right: 14px; }
.zoom span { margin-left: 10px; }
.zoom input { appearance: none; width: 173px; height: 20px; margin: 0; background: linear-gradient(#b1aeab, #b1aeab) center / 100% 2px no-repeat; }
.zoom input::-webkit-slider-thumb { appearance: none; width: 10px; height: 19px; background: #777; }
```
FILE: script.js
```js
const THEME = ['#ffffff', '#000000', '#e7e6e6', '#44546a', '#4472c4', '#ed7d31', '#a5a5a5', '#ffc000', '#5b9bd5', '#70ad47'];
const SHADES = [
  ['#f2f2f2', '#d8d8d8', '#bfbfbf', '#a5a5a5', '#7f7f7f'],
  ['#7f7f7f', '#595959', '#3f3f3f', '#262626', '#0c0c0c'],
  ['#d0cece', '#aeabaa', '#757070', '#3a3838', '#161616'],
  ['#d5dce4', '#acb8cb', '#8496b0', '#323f4f', '#222a35'],
  ['#d9e2f3', '#b4c6e7', '#8eaadb', '#2f5496', '#1f3864'],
  ['#fbe5d5', '#f7cbac', '#f4b183', '#c55a11', '#833c0b'],
  ['#ededed', '#dbdbdb', '#c9c9c9', '#7b7b7b', '#525252'],
  ['#fff2cc', '#ffe599', '#ffd965', '#bf9000', '#7f6000'],
  ['#deebf6', '#bdd7ee', '#9dc3e6', '#2e75b5', '#1f4e79'],
  ['#e2efd9', '#c5e0b3', '#a8d08d', '#538135', '#375623']
];
const STANDARD = ['#c00000', '#ff0000', '#ffc000', '#ffff00', '#92d050', '#00b050', '#00b0f0', '#0070c0', '#002060', '#7030a0'];

function swatch(color) {
  const b = document.createElement('button');
  b.style.background = color;
  b.setAttribute('aria-label', color);
  return b;
}

THEME.forEach((c, i) => {
  const b = swatch(c);
  if (i === 4) b.className = 'picked';
  document.getElementById('theme').append(b);
});
STANDARD.forEach(c => document.getElementById('standard').append(swatch(c)));
SHADES.forEach(col => {
  const d = document.createElement('div');
  d.append(...col.map(swatch));
  document.getElementById('shades').append(d);
});

// Ruler marks, one per quarter centimetre; skip lists the quarters under an indent marker.
function marks(parent, from, to, skip) {
  for (let q = from; q <= to; q++) {
    const s = document.createElement('span');
    if (q % 4 === 0) {
      if (!skip.includes(q)) {
        const b = document.createElement('b');
        b.textContent = Math.abs(q / 4);
        s.append(b);
      }
    } else {
      s.className = q % 2 === 0 ? 'half' : 'q';
    }
    parent.append(s);
  }
}
marks(document.getElementById('hruler'), -10, 74, [0, 64]);
const v = document.createElement('div');
v.className = 'vticks';
document.getElementById('vruler').append(v);
marks(v, -3, 63, [0]);
```
